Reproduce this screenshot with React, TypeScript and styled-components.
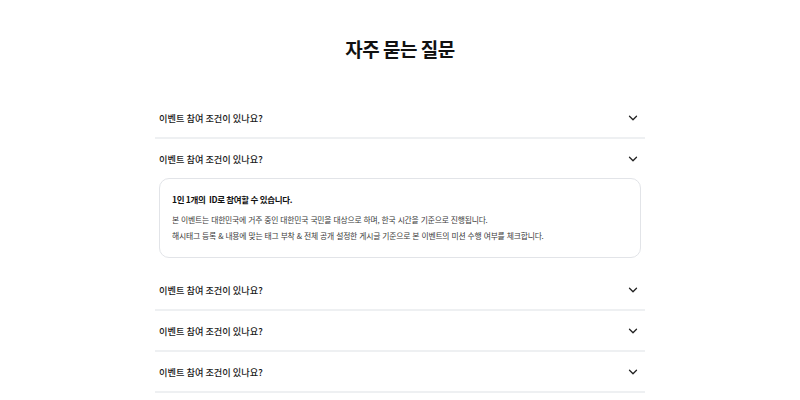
import styled, { createGlobalStyle } from "styled-components"
import { useState } from "react"
import { ChevronDown } from "lucide-react"

const GlobalStyle = createGlobalStyle`
  body {
    margin: 0;
    background: #ffffff;
    font-family: "Noto Sans CJK KR", "Noto Sans", sans-serif;
  }
`

const faqs = [
  { id: 1, question: "이벤트 참여 조건이 있나요?" },
  { id: 2, question: "이벤트 참여 조건이 있나요?" },
  { id: 3, question: "이벤트 참여 조건이 있나요?" },
  { id: 4, question: "이벤트 참여 조건이 있나요?" },
  { id: 5, question: "이벤트 참여 조건이 있나요?" },
]

export default function App() {
  const [openId, setOpenId] = useState<number | null>(2)

  return (
    <>
      <GlobalStyle />
      <Page>
        <Title>자주 묻는 질문</Title>
        <List>
          {faqs.map((faq) => {
            const open = faq.id === openId
            return (
              <Item key={faq.id} $open={open}>
                <Header onClick={() => setOpenId(open ? null : faq.id)}>
                  <Question>{faq.question}</Question>
                  <ChevronDown size={14} strokeWidth={2.2} color="#222" />
                </Header>
                {open && (
                  <AnswerBox>
                    <AnswerTitle>1인 1개의&nbsp; ID로 참여할 수 있습니다.</AnswerTitle>
                    <AnswerText>
                      본 이벤트는 대한민국에 거주 중인 대한민국 국민을 대상으로 하며, 한국 시간을 기준으로 진행됩니다.
                      <br />
                      해시태그 등록 &amp; 내용에 맞는 태그 부착 &amp; 전체 공개 설정한 게시글 기준으로 본 이벤트의 미션 수행 여부를 체크합니다.
                    </AnswerText>
                  </AnswerBox>
                )}
              </Item>
            )
          })}
        </List>
      </Page>
    </>
  )
}

const Page = styled.div`
  width: 490px;
  margin: 0 auto;
  padding-top: 35px;
`

const Title = styled.h2`
  margin: 0 0 35px;
  text-align: center;
  font-size: 19px;
  line-height: 28px;
  font-weight: 700;
  letter-spacing: -0.5px;
  color: #111;
`

const List = styled.div`
  display: flex;
  flex-direction: column;
`

const Item = styled.div<{ $open: boolean }>`
  border-bottom: 2px solid ${({ $open }) => ($open ? "transparent" : "#eef0f2")};
  padding-bottom: ${({ $open }) => ($open ? "10px" : "0")};
`

const Header = styled.div`
  height: 39px;
  display: flex;
  align-items: center;
  justify-content: space-between;
  padding: 0 5px 0 4px;
  cursor: pointer;
`

const Question = styled.span`
  font-size: 9.2px;
  font-weight: 500;
  color: #1a1a1a;
  letter-spacing: 0;
`

const AnswerBox = styled.div`
  margin: 0 4px;
  height: 80px;
  box-sizing: border-box;
  border: 1px solid #e2e4e8;
  border-radius: 10px;
  padding: 13px 12px 0;
`

const AnswerTitle = styled.div`
  font-size: 8.5px;
  line-height: 14px;
  font-weight: 700;
  color: #111;
  letter-spacing: -0.3px;
  margin-bottom: 6px;
`

const AnswerText = styled.div`
  font-size: 7.8px;
  line-height: 16px;
  color: #3a3a3a;
  letter-spacing: -0.2px;
  word-spacing: 0.6px;
`
